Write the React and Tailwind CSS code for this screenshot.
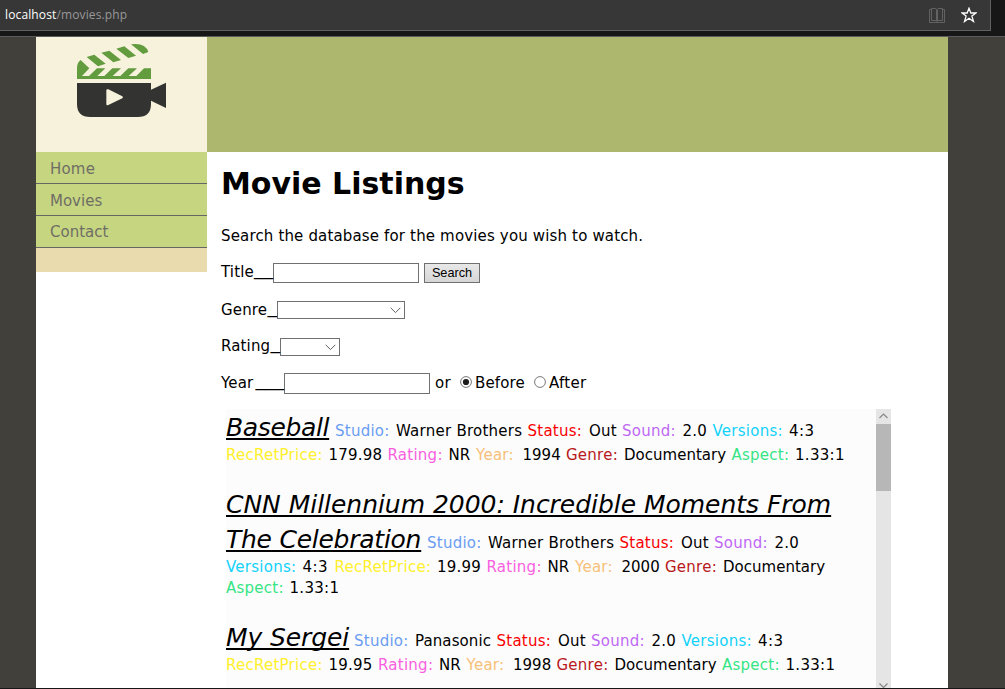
const LABELS = {
  Studio: "w-[61px] text-[#6a9cf2]",
  Status: "w-[61.5px] text-[#f80000]",
  Sound: "w-[60.5px] text-[#bf68f5]",
  Versions: "w-[76.5px] text-[#12d2fb]",
  RecRetPrice: "w-[102.5px] text-[#fff02a]",
  Rating: "w-[61px] text-[#f960df]",
  Year: "w-[46.5px] text-[#f7c078]",
  Genre: "w-[58px] text-[#b81820]",
  Aspect: "w-[63.5px] text-[#35e585]",
};

const VALUES = {
  "Warner Brothers": "w-[131.5px] tracking-[0.25px]",
  Panasonic: "w-[81.5px] tracking-[0.1px]",
  Out: "w-[33px] tracking-[0.2px]",
  "2.0": "w-[30px] tracking-[0.2px]",
  "4:3": "w-[32px] tracking-[0.4px]",
  "179.98": "w-[59px] tracking-[0.2px]",
  "19.99": "w-[49.5px] tracking-[0.2px]",
  "19.95": "w-[49.5px] tracking-[0.2px]",
  NR: "w-[27.5px] tracking-[0.1px]",
  1994: "w-[43.5px]",
  2000: "w-[43.5px]",
  1998: "w-[43.5px]",
  Documentary: "w-[107.5px] tracking-[0.02px]",
  "1.33:1": "w-[52px] tracking-[0.3px]",
};

function Field({ name, value }) {
  return (
    <>
      <span className={"shrink-0 tracking-[0.25px] " + LABELS[name]}>{name}:</span>
      <span className={"shrink-0 " + VALUES[value]}>{value}</span>
    </>
  );
}

function Line({ className = "", title, titleClass = "", fields = [] }) {
  return (
    <div className={"flex h-5 items-baseline leading-5 whitespace-nowrap " + className}>
      {title && (
        <span className={"shrink-0 text-[25px] leading-5 italic " + titleClass}>
          <span className="underline decoration-2 underline-offset-[2px] [text-decoration-skip-ink:none]">{title}</span>
        </span>
      )}
      {fields.map(([name, value]) => (
        <Field key={name} name={name} value={value} />
      ))}
    </div>
  );
}

function Label({ className, text, blanks }) {
  return (
    <div className={"-mt-px flex h-5 shrink-0 items-baseline justify-between whitespace-nowrap " + className}>
      <span className="tracking-[0.15px]">{text}</span>
      <span className="relative -top-[2px] text-[19px] leading-none">{"_".repeat(blanks)}</span>
    </div>
  );
}

function Select({ className }) {
  return (
    <div className={"flex h-[18px] items-center justify-end border border-[#707070] bg-white pr-[3px] " + className}>
      <svg width="11" height="7" viewBox="0 0 11 7" fill="none" stroke="#606060">
        <path d="M.7 .8 5.5 5.6 10.3 .8" />
      </svg>
    </div>
  );
}

function Radio({ checked }) {
  return (
    <svg width="12" height="12" viewBox="0 0 12 12">
      <circle cx="6" cy="6" r="5.4" fill="#fff" stroke="#777" />
      {checked && <circle cx="6" cy="6" r="3.1" fill="#1c1c1c" />}
    </svg>
  );
}

function Logo() {
  return (
    <svg width="171" height="115" viewBox="108 111 513 345">
      <g fill="#639b3f">
        <path d="M231 237V206Q231 187 242 180L268 205 246 228H267L291 205H316L292 228H313L337 205H363L338 228H361L385 205H411L386 228H409L432 205H453V237Z" />
        <path d="M260 171 283 164 317 191 294 199ZM304 158 328 152 363 180 340 187ZM349 146 373 139 408 167 385 174ZM393 133Q436 127 445 156L429 162Z" />
      </g>
      <path
        fill="#333331"
        d="M231 249H453V269L498 248V324L453 302V312Q453 351 413 351H271Q231 351 231 312Z"
      />
      <path fill="#f7f2dc" d="M319 271Q319 266 325 268L367 289Q371 292 367 295L325 315Q319 318 319 312Z" />
    </svg>
  );
}

const NAV = [
  ["Home", "pt-[7px] tracking-[0.2px]"],
  ["Movies", "pt-[7px]"],
  ["Contact", "pt-[6px]"],
];

export default function App() {
  return (
    <div className="flex h-[689px] w-[1005px] flex-col overflow-hidden border-b border-[#161616] bg-[#42403a] font-['DejaVu_Sans',Verdana,sans-serif] text-[15px] text-black">
      <header className="flex h-[37px] shrink-0 border-b border-[#5c5c5c] bg-[#171717] pb-[5px]">
        <div className="flex h-[31px] w-[991px] items-center border-r border-b border-[#606060] bg-[#373737] pr-[13px] pl-[5px]">
          <div className="flex-1 pb-px font-['Open_Sans',sans-serif] text-[12px] leading-4 tracking-[0.13px] text-[#989898]">
            <span className="text-white">localhost</span>/movies.php
          </div>
          <svg className="mr-4" width="16" height="15" viewBox="0 0 16 15" fill="none" stroke="#626262">
            <path d="M2.5 1.5H.5V14.5H15.5V1.5H13.5M2.5 .5H7L8 1.5 9 .5H13.5V12.5H9L8 13.5 7 12.5H2.5ZM7.5 1.5V13M8.5 1.5V13" />
          </svg>
          <svg width="16" height="16" viewBox="0 0 16 16" fill="none" stroke="#fff" strokeWidth="1.3">
            <path d="M8 1.2 9.8 6H15L10.9 9.1 12.5 14.5 8 11.3 3.5 14.5 5.1 9.1 1 6H6.2Z" />
          </svg>
        </div>
      </header>

      <div className="ml-9 flex min-h-0 w-[912px] flex-1 flex-col bg-white">
        <div className="flex h-[115px] shrink-0 bg-[#adb76e]">
          <div className="w-[171px] bg-[#f7f2dc]">
            <Logo />
          </div>
        </div>

        <div className="flex min-h-0 flex-1">
          <nav className="h-[120px] w-[171px] shrink-0 bg-[#eadbaf] text-[#6f6e66]">
            {NAV.map(([label, pad]) => (
              <div key={label} className={"h-8 border-b border-[#666666] bg-[#c6d580] pl-[14px] leading-5 " + pad}>
                {label}
              </div>
            ))}
          </nav>

          <main className="flex min-h-0 flex-1 flex-col pl-[14px]">
            <h1 className="mt-[12px] h-10 shrink-0 text-[30px] leading-10 font-bold">Movie Listings</h1>
            <p className="mt-[22px] h-5 shrink-0 leading-5 tracking-[0.155px]">
              Search the database for the movies you wish to watch.
            </p>

            <div className="mt-[16px] flex h-[21px] shrink-0 items-start leading-5">
              <Label className="w-[52px]" text="Title" blanks={2} />
              <div className="mt-px h-5 w-[146px] border border-[#707070] bg-white" />
              <div className="mt-px ml-[5px] flex h-5 w-14 items-center justify-center border border-[#707070] bg-gradient-to-b from-[#e8e8e8] to-[#d6d6d6] font-['Liberation_Sans',sans-serif] text-[12.7px] leading-4">
                Search
              </div>
            </div>

            <div className="mt-[17px] flex h-5 shrink-0 items-start leading-5">
              <Label className="w-14" text="Genre" blanks={1} />
              <Select className="mt-px w-32" />
            </div>

            <div className="mt-[16px] flex h-5 shrink-0 items-start leading-5">
              <Label className="w-[59px]" text="Rating" blanks={1} />
              <Select className="mt-[2px] w-[60px]" />
            </div>

            <div className="mt-[17px] flex h-[21px] shrink-0 items-start leading-5">
              <Label className="w-[63px]" text="Year" blanks={3} />
              <div className="h-[21px] w-[146px] border border-[#707070] bg-white" />
              <span className="ml-[5px] w-[25px] tracking-[0.2px]">or</span>
              <div className="mt-[3px]"><Radio checked /></div>
              <span className="ml-[3px] w-[59px] tracking-[0.15px]">Before</span>
              <div className="mt-[3px]"><Radio /></div>
              <span className="ml-[3px] tracking-[0.3px]">After</span>
            </div>

            <div className="mt-[15px] ml-[5px] flex min-h-0 w-[665px] flex-1">
              <div className="w-[650px] overflow-hidden bg-[#fcfcfc] pt-[9px]">
                <Line
                  title="Baseball"
                  titleClass="w-[109px] tracking-[-0.35px]"
                  fields={[["Studio", "Warner Brothers"], ["Status", "Out"], ["Sound", "2.0"], ["Versions", "4:3"]]}
                />
                <Line
                  className="mt-[7px]"
                  fields={[["RecRetPrice", "179.98"], ["Rating", "NR"], ["Year", "1994"], ["Genre", "Documentary"], ["Aspect", "1.33:1"]]}
                />
                <Line
                  className="mt-[30px]"
                  title="CNN Millennium 2000: Incredible Moments From"
                  titleClass="tracking-[-0.03px]"
                />
                <Line
                  className="mt-[15px]"
                  title="The Celebration"
                  titleClass="w-[201px] tracking-[-0.25px]"
                  fields={[["Studio", "Warner Brothers"], ["Status", "Out"], ["Sound", "2.0"]]}
                />
                <Line
                  className="mt-[7px]"
                  fields={[["Versions", "4:3"], ["RecRetPrice", "19.99"], ["Rating", "NR"], ["Year", "2000"], ["Genre", "Documentary"]]}
                />
                <Line className="mt-px" fields={[["Aspect", "1.33:1"]]} />
                <Line
                  className="mt-[30px]"
                  title="My Sergei"
                  titleClass="w-[128px] tracking-[-0.1px]"
                  fields={[["Studio", "Panasonic"], ["Status", "Out"], ["Sound", "2.0"], ["Versions", "4:3"]]}
                />
                <Line
                  className="mt-[7px]"
                  fields={[["RecRetPrice", "19.95"], ["Rating", "NR"], ["Year", "1998"], ["Genre", "Documentary"], ["Aspect", "1.33:1"]]}
                />
              </div>
              <div className="flex w-[15px] flex-col overflow-hidden bg-[#e5e5e5]">
                <div className="flex h-[15px] shrink-0 items-center justify-center pb-px">
                  <svg width="9" height="6" viewBox="0 0 9 6" fill="none" stroke="#888" strokeWidth="1.2">
                    <path d="M.5 5 4.5 1 8.5 5" />
                  </svg>
                </div>
                <div className="h-[67px] shrink-0 bg-[#b7b7b7]" />
                <div className="flex min-h-0 flex-1 items-end justify-center">
                  <svg width="9" height="5" viewBox="0 0 9 5" fill="none" stroke="#888" strokeWidth="1.2">
                    <path d="M.5 .5 4.5 4.5 8.5 .5" />
                  </svg>
                </div>
              </div>
            </div>
          </main>
        </div>
      </div>
    </div>
  );
}
